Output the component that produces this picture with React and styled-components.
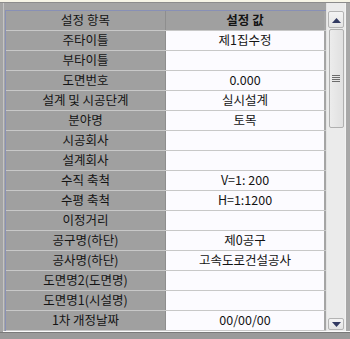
import React from "react";
import styled, { createGlobalStyle } from "styled-components";

const Global = createGlobalStyle`
  html, body { margin: 0; padding: 0; }
  body {
    width: 350px;
    height: 339px;
    overflow: hidden;
    background: #a4a4a4;
    font-family: "Noto Sans CJK KR", "Noto Sans", sans-serif;
  }
`;

const Window = styled.div`
  width: 350px;
  height: 339px;
  display: flex;
  flex-direction: column;
  background: #a4a4a4;
`;

const TopStrip = styled.div`
  height: 2px;
  background: #f6f4e6;
  border-bottom: 1px solid #8c8c8c;
  flex: none;
`;

const Body = styled.div`
  display: flex;
  padding: 7px 0 0 3px;
  height: 328px;
  box-sizing: border-box;
  flex: none;
`;

const LeftEdge = styled.div`
  width: 1px;
  background: #c4c4c4;
  margin-right: 1px;
  margin-top: -7px;
`;

const Table = styled.div`
  width: 321px;
  border-left: 1px solid #8890b6;
  border-top: 1px solid #8890b6;
  display: flex;
  flex-direction: column;
  overflow: hidden;
`;

const Row = styled.div`
  display: grid;
  grid-template-columns: 160px 159px;
  height: 20px;
  flex: none;
  border-bottom: 1px solid #c8c8c8;
  box-sizing: border-box;
`;

const Cell = styled.div`
  display: flex;
  align-items: center;
  justify-content: center;
  font-size: 12.5px;
  line-height: 1;
  color: #141414;
  white-space: nowrap;
  background: ${(p) => (p.$label ? "#a0a0a0" : "#fcfbff")};
  border-right: 1px solid ${(p) => (p.$label ? "#8e8e8e" : "#a6a6a6")};
  font-weight: ${(p) => (p.$bold ? 700 : 400)};
`;

const HeaderCell = styled(Cell)`
  background: #a0a0a0;
`;

const Scroll = styled.div`
  width: 19px;
  margin-top: -7px;
  padding-top: 8px;
  padding-bottom: 1px;
  box-sizing: border-box;
  background: #ebebeb;
  border-left: 1px solid #e2e2e2;
  display: flex;
  flex-direction: column;
  align-items: center;
  overflow: hidden;
`;

const ArrowButton = styled.div`
  width: 16px;
  height: ${(p) => p.$h}px;
  box-sizing: border-box;
  border: 1px solid #b4b4b4;
  border-radius: 2px;
  background: linear-gradient(#f4f4f4, #e4e4e4);
  display: flex;
  justify-content: center;
  padding-top: ${(p) => p.$pt}px;
  flex: none;
`;

const Thumb = styled.div`
  width: 15px;
  height: 99px;
  margin-top: 1px;
  box-sizing: border-box;
  border: 1px solid #b0b0b0;
  border-radius: 2px;
  background: linear-gradient(90deg, #ececec, #e0e0e0);
  display: flex;
  align-items: center;
  justify-content: center;
  flex: none;
`;

const Grip = styled.div`
  display: flex;
  flex-direction: column;
  gap: 1px;
`;

const GripLine = styled.div`
  width: 8px;
  height: 1px;
  background: #6c6c6c;
`;

const Spacer = styled.div`
  flex: 1;
`;

const RightEdge = styled.div`
  width: 5px;
  margin-top: -7px;
  border-left: 1px solid #f2f2f2;
  background: #a8a8a8;
  box-sizing: border-box;
`;

const BottomLine = styled.div`
  height: 1px;
  margin-left: 3px;
  background: #fbfbfb;
  flex: none;
`;

const BottomStrip = styled.div`
  flex: 1;
  border-top: 1px solid #7a7a7a;
  background: #9a9a9a;
`;

const rows = [
  ["주타이틀", "제1집수정"],
  ["부타이틀", ""],
  ["도면번호", "0.000"],
  ["설계 및 시공단계", "실시설계"],
  ["분야명", "토목"],
  ["시공회사", ""],
  ["설계회사", ""],
  ["수직 축척", "V=1: 200"],
  ["수평 축척", "H=1:1200"],
  ["이정거리", ""],
  ["공구명(하단)", "제0공구"],
  ["공사명(하단)", "고속도로건설공사"],
  ["도면명2(도면명)", ""],
  ["도면명1(시설명)", ""],
  ["1차 개정날짜", "00/00/00"],
];

const Up = () => (
  <svg width="9" height="5" viewBox="0 0 9 5">
    <polygon points="4.5,0 9,5 0,5" fill="#323a62" />
  </svg>
);
const Down = () => (
  <svg width="9" height="5" viewBox="0 0 9 5">
    <polygon points="0,0 9,0 4.5,5" fill="#323a62" />
  </svg>
);

export default function App() {
  return (
    <Window>
      <Global />
      <TopStrip />
      <Body>
        <LeftEdge />
        <Table>
          <Row>
            <HeaderCell $label>설정 항목</HeaderCell>
            <HeaderCell $bold>설정 값</HeaderCell>
          </Row>
          {rows.map(([k, v]) => (
            <Row key={k}>
              <Cell $label>{k}</Cell>
              <Cell>{v}</Cell>
            </Row>
          ))}
        </Table>
        <Scroll>
          <ArrowButton $h={17} $pt={6}>
            <Up />
          </ArrowButton>
          <Thumb>
            <Grip>
              <GripLine />
              <GripLine />
              <GripLine />
              <GripLine />
            </Grip>
          </Thumb>
          <Spacer />
          <ArrowButton $h={12} $pt={3}>
            <Down />
          </ArrowButton>
        </Scroll>
        <RightEdge />
      </Body>
      <BottomLine />
      <BottomStrip />
    </Window>
  );
}
